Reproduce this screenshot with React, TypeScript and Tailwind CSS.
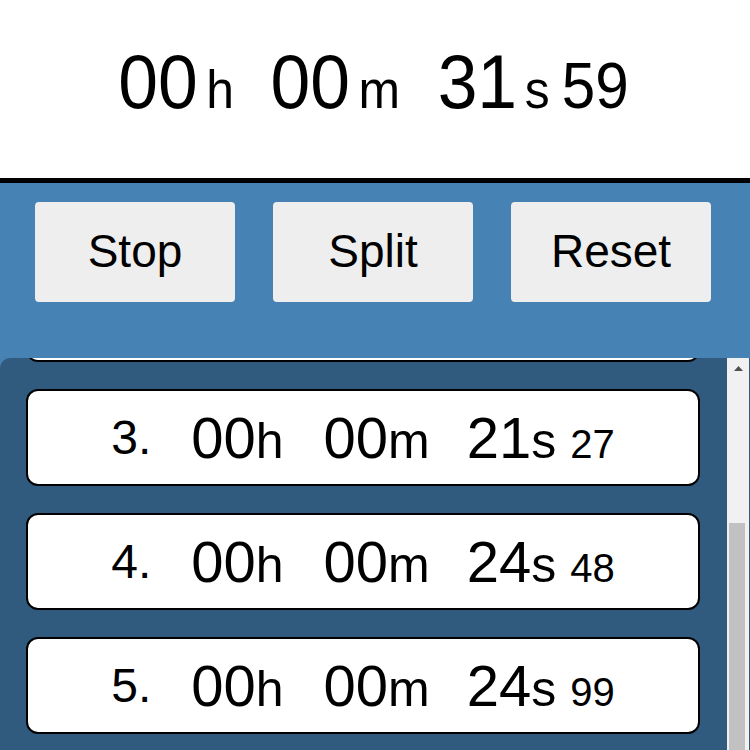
import React from "react";

const splits = [
  { n: "1.", h: "00", m: "00", s: "05", ms: "12" },
  { n: "2.", h: "00", m: "00", s: "12", ms: "40" },
  { n: "3.", h: "00", m: "00", s: "21", ms: "27" },
  { n: "4.", h: "00", m: "00", s: "24", ms: "48" },
  { n: "5.", h: "00", m: "00", s: "24", ms: "99" },
];

export default function App() {
  return (
    <div
      className="w-[750px] h-[750px] overflow-hidden bg-[#4682b4] text-black"
      style={{ fontFamily: '"Liberation Sans", Arial, sans-serif' }}
    >
      <div className="h-[183px] bg-white border-b-[5px] border-black flex justify-center pt-[44px] pr-[3px] leading-none">
        <div className="flex items-baseline scale-x-[0.94]">
          <span className="text-[76px]">00</span>
          <span className="text-[53px] ml-[9px]">h</span>
          <span className="text-[76px] ml-[39px]">00</span>
          <span className="text-[53px] ml-[9px]">m</span>
          <span className="text-[76px] ml-[40px]">31</span>
          <span className="text-[53px] ml-[8px]">s</span>
          <span className="text-[64px] ml-[13px]">59</span>
        </div>
      </div>

      <div className="flex gap-[38px] pl-[35px] pt-[19px] h-[175px]">
        {["Stop", "Split", "Reset"].map((t) => (
          <button
            key={t}
            className="w-[200px] h-[100px] bg-[#eeeeee] rounded-[4px] flex items-center justify-center pb-[2px] text-[46px] leading-none text-black"
          >
            {t}
          </button>
        ))}
      </div>

      <div className="h-[392px] flex bg-[#315b7e] rounded-tl-[10px] overflow-hidden">
        <div className="flex-1 overflow-hidden pl-[26px] pr-[27px]">
          <div className="flex flex-col gap-[27px] mt-[-217px]">
            {splits.map((r) => (
              <div
                key={r.n}
                className="h-[97px] bg-white border-2 border-black rounded-[12px] flex items-center justify-center leading-none"
              >
                <span className="text-[48px] mr-[40px]">{r.n}</span>
                <div className="flex items-baseline">
                  <span className="text-[58px]">{r.h}</span>
                  <span className="text-[50px]">h</span>
                  <span className="text-[58px] ml-[40px]">{r.m}</span>
                  <span className="text-[50px]">m</span>
                  <span className="text-[58px] ml-[37px]">{r.s}</span>
                  <span className="text-[50px]">s</span>
                  <span className="text-[40px] ml-[14px]">{r.ms}</span>
                </div>
              </div>
            ))}
          </div>
        </div>
        <div className="w-[22px] mr-[1px] bg-[#f1f1f1] flex flex-col">
          <div className="h-[21px] flex items-center justify-center">
            <svg width="9" height="5" viewBox="0 0 9 5">
              <polygon points="4.5,0 9,5 0,5" fill="#505050" />
            </svg>
          </div>
          <div className="flex-1 pt-[144px] pl-[2px]">
            <div className="w-[16px] h-full bg-[#c1c1c1]" />
          </div>
        </div>
      </div>
    </div>
  );
}
